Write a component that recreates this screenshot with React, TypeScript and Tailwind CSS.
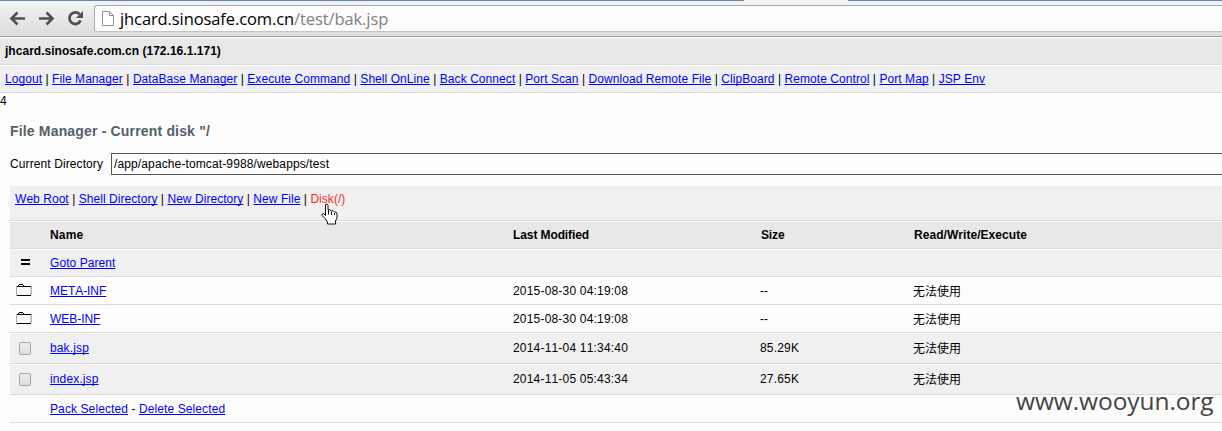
import React from "react";

const navLinks = [
  "Logout",
  "File Manager",
  "DataBase Manager",
  "Execute Command",
  "Shell OnLine",
  "Back Connect",
  "Port Scan",
  "Download Remote File",
  "ClipBoard",
  "Remote Control",
  "Port Map",
  "JSP Env",
];

const dirLinks = ["Web Root", "Shell Directory", "New Directory", "New File"];

type Entry = { name: string; kind: "dir" | "file"; modified: string; size: string };

const entries: Entry[] = [
  { name: "META-INF", kind: "dir", modified: "2015-08-30 04:19:08", size: "--" },
  { name: "WEB-INF", kind: "dir", modified: "2015-08-30 04:19:08", size: "--" },
  { name: "bak.jsp", kind: "file", modified: "2014-11-04 11:34:40", size: "85.29K" },
  { name: "index.jsp", kind: "file", modified: "2014-11-05 05:43:34", size: "27.65K" },
];

const grid = "grid grid-cols-[40px_463px_247px_154px_1fr] border-b border-b-[#dadada] border-t leading-[14px]";

function Link({ children }: { children: React.ReactNode }) {
  return (
    <a href="#" className="text-[#0000ff] underline underline-offset-1 decoration-1 [text-decoration-skip-ink:none]">
      {children}
    </a>
  );
}

function BrowserBar() {
  return (
    <div className="flex h-[37px] border-b border-[#a0a0a0] bg-linear-to-b from-[#f4f4f5] to-[#dcdcdc] relative">
      <div className="absolute left-0 top-0 h-px w-[744px] bg-[#6784b0]" />
      <div className="absolute left-[848px] right-0 top-0 h-px bg-[#6784b0]" />
      <svg width="94" height="36" viewBox="0 0 94 36" className="shrink-0" fill="none" stroke="#505050" strokeWidth="2.6">
        <path d="M25 18.5H11.5M17.5 12.5L11.5 18.5L17.5 24.5" />
        <path d="M39 18.5H52.5M46.5 12.5L52.5 18.5L46.5 24.5" />
        <path d="M79.6 14.3A5.8 5.8 0 1 0 80.6 20.5" strokeWidth="2.8" />
        <path d="M83 11V18H76Z" fill="#505050" stroke="none" />
      </svg>
      <div className="mt-[5px] flex h-[27px] flex-1 rounded-l-[3px] border border-r-0 border-[#a9a9a9] border-b-[#c4c4c4] bg-[#fdfdfd]">
        <svg width="13" height="16" viewBox="0 0 13 16" className="ml-[7px] mt-[5px] shrink-0" fill="#fff" stroke="#929292">
          <path d="M.5.5H7.5L11.5 4.5V14.5H.5ZM7.5.5V4.5H11.5" />
        </svg>
        <span className="ml-[5px] whitespace-nowrap font-['Open_Sans',sans-serif] text-[16.5px] leading-[26px] tracking-[-0.1px] text-black">
          jhcard.sinosafe.com.cn<span className="text-[#808080]">/test/bak.jsp</span>
        </span>
      </div>
    </div>
  );
}

function Folder() {
  return (
    <svg width="16" height="12" viewBox="0 0 16 12" className="ml-[6px] mt-[6px]" shapeRendering="crispEdges" fill="none">
      <path d="M.5 2V12" stroke="#a8a8a8" />
      <path d="M14.5 2V12" stroke="#ffc58a" />
      <path d="M15.5 2V11" stroke="#9dbcd6" />
      <path d="M2 1.5H3M3 .5H7M7 1.5H8M1 2.5H15M1 11.5H15" stroke="#000" />
    </svg>
  );
}

export default function App() {
  return (
    <div className="relative h-[431px] w-[1222px] overflow-hidden bg-[#fdfdfd] font-['Liberation_Sans',Arial,'Noto_Sans_CJK_SC',sans-serif] text-[12px] text-black [font-kerning:none]">
      <BrowserBar />
      <div className="h-7 border-b border-t border-b-[#dadada] border-t-white bg-[#e8e8e8] pl-[5px] font-bold leading-[26px] tracking-[0.03px]">
        jhcard.sinosafe.com.cn (172.16.1.171)
      </div>
      <div className="h-7 whitespace-nowrap border-b border-t border-b-[#dadada] border-t-white bg-[#f0f0f0] pl-[5px] leading-[26px] tracking-[0.065px]">
        {navLinks.map((label, i) => (
          <React.Fragment key={label}>
            {i > 0 && " | "}
            <Link>{label}</Link>
          </React.Fragment>
        ))}
      </div>
      <div className="h-4 leading-4">4</div>
      <div className="pl-[10px]">
        <h2 className="mt-[13px] text-[14px] font-bold leading-[18px] tracking-[0.17px] text-[#566069]">File Manager - Current disk &quot;/</h2>
        <div className="mt-[13px] flex h-[22px] tracking-[0.1px]">
          <span className="w-[101px] leading-[22px]">Current Directory</span>
          <div className="flex-1 border border-r-0 border-[#555] pl-[2px] leading-[20px] tracking-[0.12px]">/app/apache-tomcat-9988/webapps/test</div>
        </div>
        <div className="mt-[11px] h-[35px] border-b border-[#dadada] bg-[#f0f0f0] pl-[5px] leading-[26px] tracking-[0.05px]">
          {dirLinks.map((label) => (
            <React.Fragment key={label}>
              <Link>{label}</Link>
              {" | "}
            </React.Fragment>
          ))}
          <span className="text-[#ff2a20]">Disk(/)</span>
        </div>
        <div className={`${grid} h-7 border-t-white bg-[#e8e8e8] pt-[6px] font-bold`}>
          <span />
          <span className="tracking-[0.2px]">Name</span>
          <span className="tracking-[-0.1px]">Last Modified</span>
          <span className="pl-px tracking-[-0.15px]">Size</span>
          <span className="tracking-[0.05px]">Read/Write/Execute</span>
        </div>
        <div className={`${grid} h-7 border-t-white bg-[#f0f0f0] pt-[6px] tracking-[0.07px]`}>
          <svg width="9" height="6" className="ml-[11px] mt-[3px]" shapeRendering="crispEdges">
            <path d="M0 1H9M0 5H9" stroke="#000" strokeWidth="2" />
          </svg>
          <Link>Goto Parent</Link>
        </div>
        {entries.map((e) => (
          <div
            key={e.name}
            className={`${grid} ${e.kind === "dir" ? "h-7 border-t-transparent" : "h-[31px] border-t-white bg-[#f0f0f0]"}`}
          >
            {e.kind === "dir" ? (
              <Folder />
            ) : (
              <span className="ml-[9px] mt-[8px] h-[13px] w-3 rounded-[2px] border border-[#a4a4a4] bg-linear-to-b from-[#ededed] to-[#dedede]" />
            )}
            <span className={e.kind === "dir" ? "pt-[6px] tracking-[-0.05px]" : "pt-[7px] tracking-[0.13px]"}>
              <Link>{e.name}</Link>
            </span>
            <span className={e.kind === "dir" ? "pt-[6px] tracking-[0.19px]" : "pt-[7px] tracking-[0.19px]"}>{e.modified}</span>
            <span className={e.kind === "dir" ? "pt-[6px]" : "pt-[7px] tracking-[0.19px]"}>{e.size}</span>
            <span className={e.kind === "dir" ? "-ml-px pt-[7px]" : "-ml-px pt-[8px]"}>无法使用</span>
          </div>
        ))}
        <div className="h-7 border-b border-[#dadada] pl-[40px] pt-[7px] leading-[14px] tracking-[0.1px]">
          <Link>Pack Selected</Link> - <Link>Delete Selected</Link>
        </div>
      </div>

      <svg width="17" height="22" viewBox="0 0 17 22" className="absolute left-[321px] top-[203px]">
        <path
          d="M4.5 1.5Q6.5 .2 7 2.5V7L8.5 6.5L10.5 8L12 7.5L13.5 9L15.5 9.5L16 11V15L14.5 18V21H6.5V19L4 15.5L1 12.5Q.5 10.5 2.5 10.5L4.5 12.5Z"
          fill="#fff"
          stroke="#111"
        />
        <path d="M7.5 7V11.5M10.5 8.5V12M13.5 10V12" stroke="#111" fill="none" />
      </svg>
      <div className="absolute left-[1016px] top-[385px] font-['Open_Sans',sans-serif] text-[24.5px] leading-8 tracking-[-0.08px] text-[#444]">www.wooyun.org</div>
    </div>
  );
}
